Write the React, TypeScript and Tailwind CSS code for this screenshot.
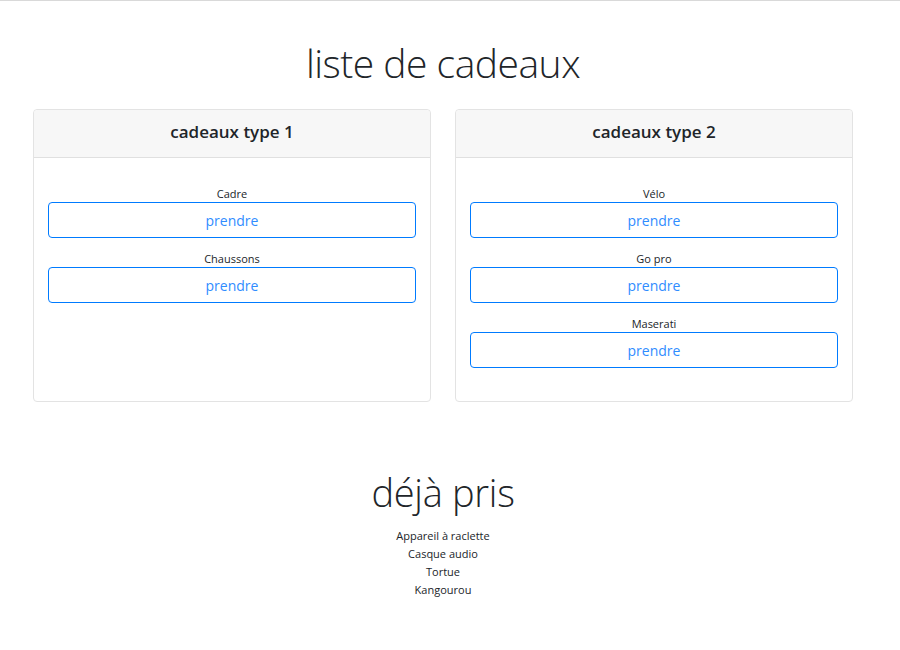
import React from 'react';

const groups = [
  { title: 'cadeaux type 1', items: ['Cadre', 'Chaussons'] },
  { title: 'cadeaux type 2', items: ['Vélo', 'Go pro', 'Maserati'] },
];

const taken = ['Appareil à raclette', 'Casque audio', 'Tortue', 'Kangourou'];

const GiftCard: React.FC<{ title: string; items: string[] }> = ({ title, items }) => (
  <div className="flex-1 flex flex-col rounded border border-[#e3e3e3] bg-white">
    <div className="h-[48px] flex items-center justify-center bg-[#f7f7f7] border-b border-[#e0e0e0] rounded-t">
      <h2 className="text-[17px] font-semibold text-[#212529] -mt-[3px]">{title}</h2>
    </div>
    <div className="px-[14px] pt-[28px] pb-[33px] flex flex-col gap-[13px]">
      {items.map(item => (
        <div key={item} className="flex flex-col items-center">
          <span className="text-[11px] leading-[16px] text-[#212529]">{item}</span>
          <button className="w-full h-[36px] rounded border border-[#007bff] text-[#2f8cff] text-[14px]">
            prendre
          </button>
        </div>
      ))}
    </div>
  </div>
);

const App: React.FC = () => {
  return (
    <div className="w-[900px] min-h-[650px] bg-white border-t border-[#d9d9d9]" style={{ fontFamily: '"Open Sans", "Noto Sans", sans-serif' }}>
      <div className="w-[886px]">
        <h1 className="text-center font-light text-[39px] tracking-[-0.5px] leading-[50px] text-[#212529] pt-[37px] pb-[21px]">
          liste de cadeaux
        </h1>
        <div className="flex gap-[24px] px-[33px]">
          {groups.map(g => <GiftCard key={g.title} title={g.title} items={g.items} />)}
        </div>
        <div className="flex flex-col items-center pt-[66px]">
          <h1 className="font-light text-[38px] tracking-[-0.3px] leading-[48px] text-[#212529]">déjà pris</h1>
          <ul className="text-center text-[11px] leading-[18px] text-[#212529] mt-[11px]">
            {taken.map(t => <li key={t}>{t}</li>)}
          </ul>
        </div>
      </div>
    </div>
  );
};

export default App;
